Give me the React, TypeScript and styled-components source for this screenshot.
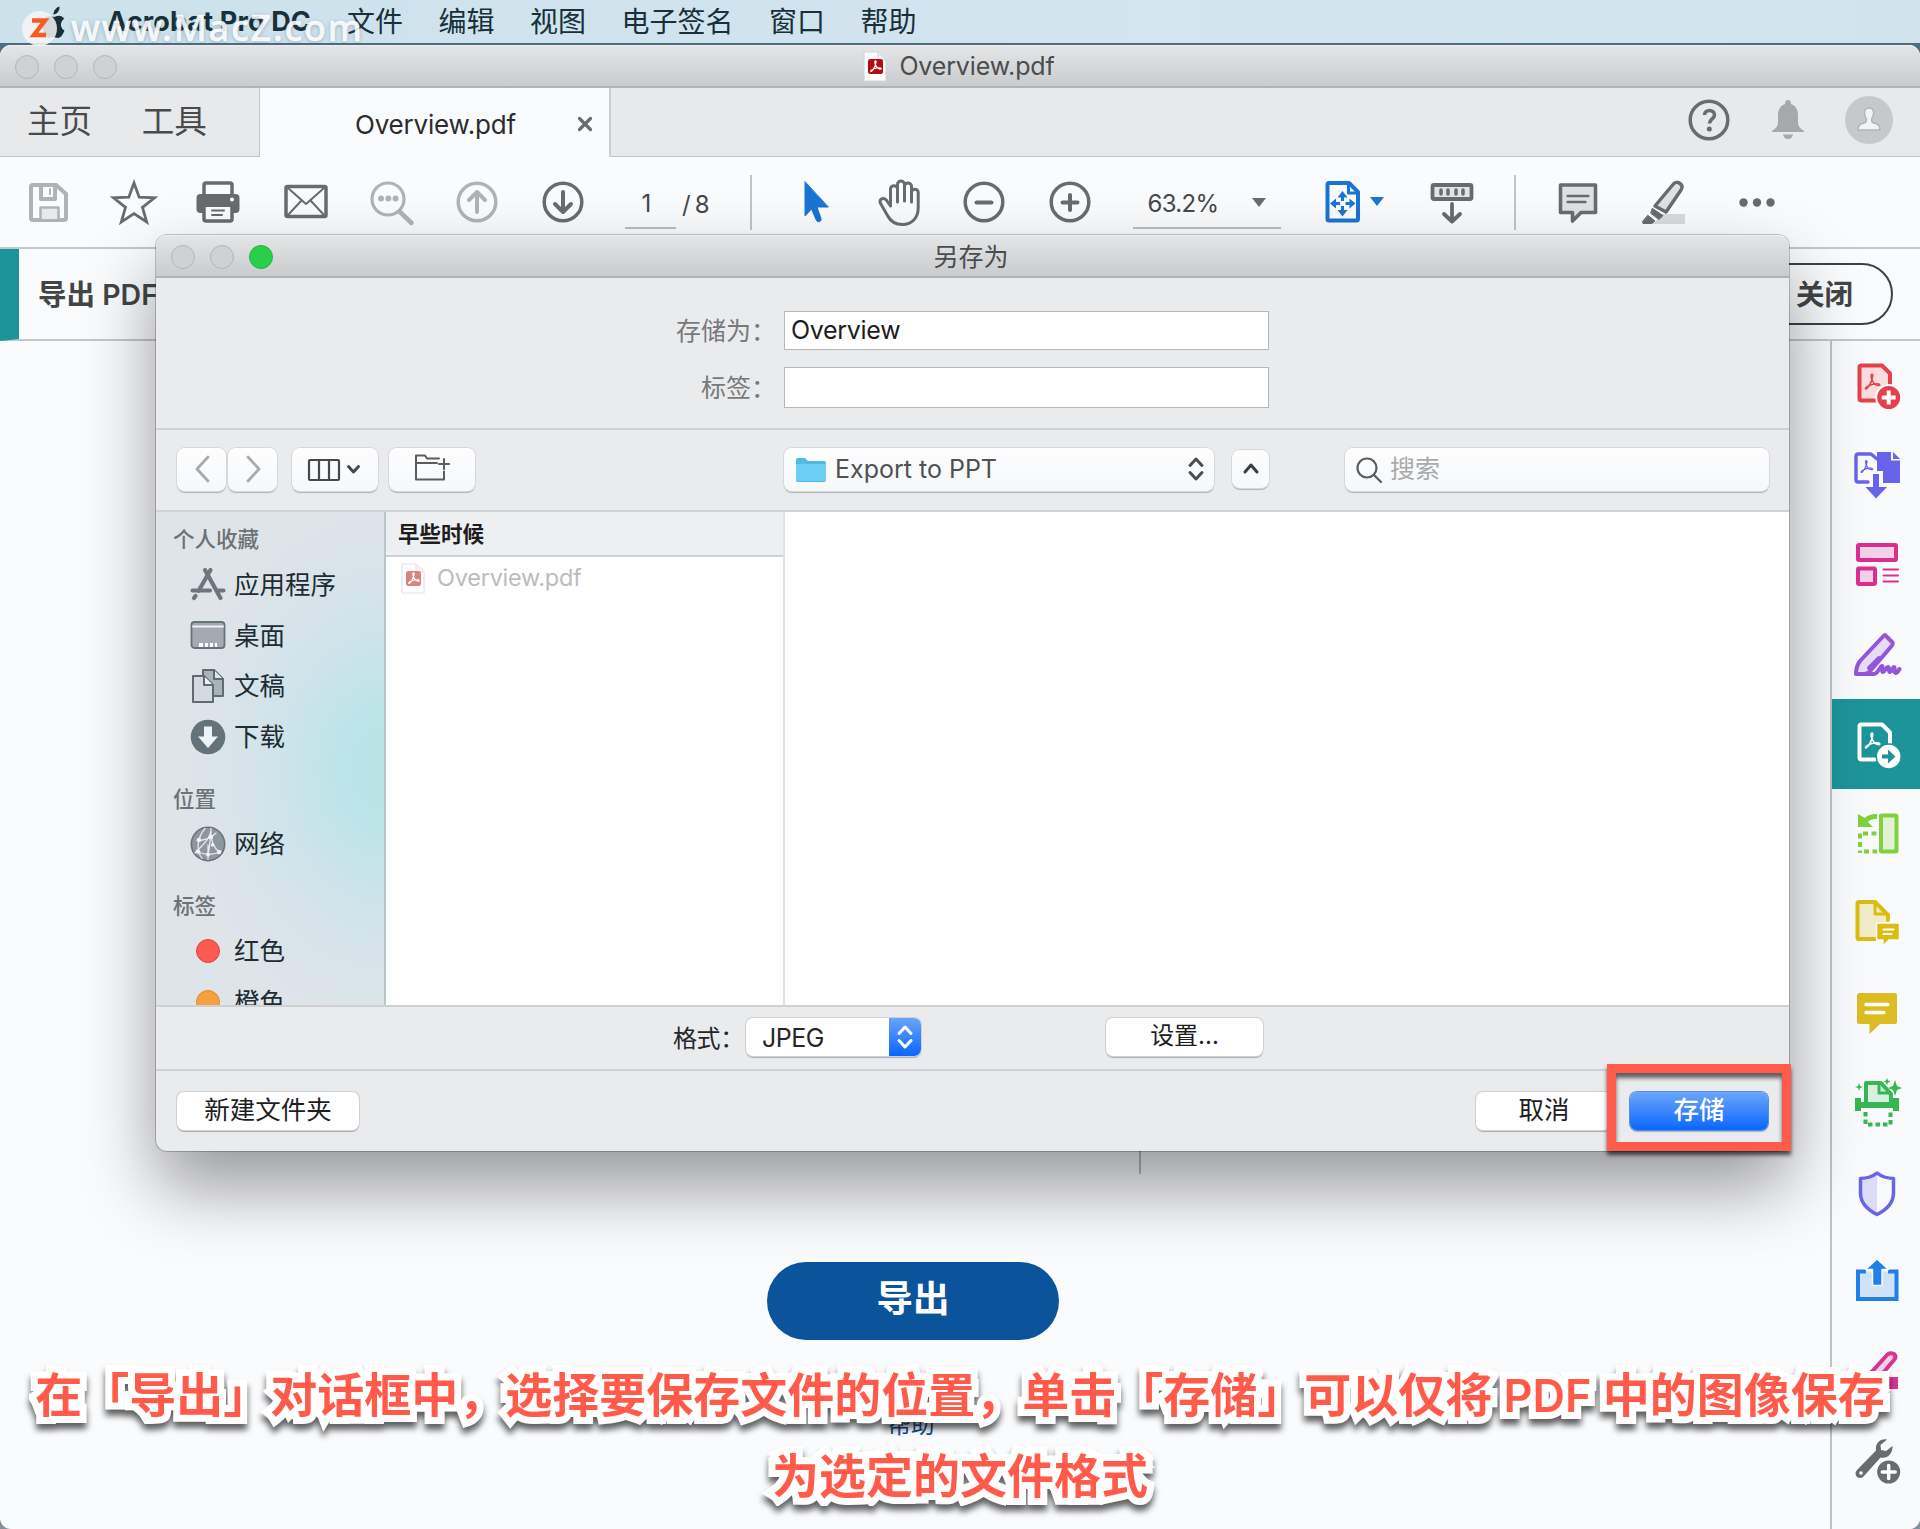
import React from 'react';
import styled, { createGlobalStyle } from 'styled-components';

const GREY = '#6a6b6d';
const PALE = '#b1b2b4';
const BLUE = '#1b74d2';

const GlobalStyle = createGlobalStyle`
  * { box-sizing: border-box; }
  html, body { margin: 0; padding: 0; }
  body {
    font-family: Inter, "Noto Sans CJK SC", sans-serif;
    line-height: 1;
    width: 1920px;
    height: 1529px;
    overflow: hidden;
    background: #4f788c;
  }
  svg { display: block; flex: none; overflow: visible; }
`;

const Screen = styled.div`
  position: relative;
  width: 1920px;
  height: 1529px;
  overflow: hidden;
  display: flex;
  flex-direction: column;
  background: linear-gradient(#4b6d80 0 60px, #7d93a3 100%);
`;

/* ---------- menu bar ---------- */

const MenuBar = styled.header`
  display: flex;
  align-items: center;
  height: 43px;
  padding-left: 38px;
  flex: none;
  background: linear-gradient(90deg, #cbe2ea, #d3e5ef 60%, #d0e5eb);
  color: #17303a;
  font-size: 28px;
`;

const AppName = styled.span`
  margin-left: 38px;
  width: 240px;
  font-weight: 700;
  font-size: 27px;
  letter-spacing: 0.15px;
  white-space: nowrap;
`;

const MenuItems = styled.nav`
  display: flex;
  gap: 35.5px;
  white-space: nowrap;
`;

/* ---------- application window ---------- */

const AppWindow = styled.main`
  display: flex;
  flex-direction: column;
  flex: 1;
  margin-top: 2px;
  border-radius: 11px;
  overflow: hidden;
  background: #fafbfd;
`;

const TitleBar = styled.div<{ $h: number }>`
  position: relative;
  display: flex;
  align-items: center;
  justify-content: center;
  flex: none;
  height: ${p => p.$h}px;
  padding: 1px 2px 0 0;
  background: linear-gradient(#e4e5e6, #cacbcd);
  border-top: 1px solid #f0f0f1;
  border-bottom: 2px solid #b1b2b4;
  color: #4b4c4e;
  font-size: 25px;
`;

const Lights = styled.div<{ $left: number }>`
  position: absolute;
  left: ${p => p.$left}px;
  top: calc(50% + 0.5px);
  transform: translateY(-50%);
  display: flex;
  gap: 15px;
`;

const Light = styled.i<{ $on?: boolean }>`
  width: 24px;
  height: 24px;
  border-radius: 50%;
  background: ${p => (p.$on ? '#27cf4b' : '#d0d1d3')};
  border: 1.5px solid ${p => (p.$on ? '#1fb83e' : '#b4b5b7')};
`;

const DocTitle = styled.span`
  margin-left: 12px;
  letter-spacing: -0.15px;
`;

const TabBar = styled.div`
  display: flex;
  flex: none;
  height: 69px;
  background: #e8e9eb;
`;

const TabLinks = styled.div`
  display: flex;
  gap: 49.5px;
  width: 260px;
  padding: 17px 0 0 27px;
  font-size: 32.6px;
  color: #4a4a4c;
  border-right: 1px solid #c3c4c6;
  border-bottom: 1px solid #c3c4c6;
`;

const ActiveTab = styled.div`
  display: flex;
  align-items: center;
  justify-content: space-between;
  width: 351px;
  padding: 4px 16px 0 95px;
  background: #fafbfd;
  border-right: 2px solid #cdced0;
  font-size: 26px;
  letter-spacing: -0.2px;
  color: #2c2c2e;
`;

const TabActions = styled.div`
  display: flex;
  flex: 1;
  align-items: center;
  justify-content: flex-end;
  padding: 0 27px 4px 0;
  border-bottom: 1px solid #c3c4c6;
  svg + svg { margin-left: 37px; }
`;

const Toolbar = styled.div`
  display: flex;
  align-items: center;
  flex: none;
  height: 92px;
  border-bottom: 2px solid #c5c6c8;
`;

const Tool = styled.div<{ $gap: number; $w?: number }>`
  display: flex;
  justify-content: center;
  flex: none;
  width: ${p => p.$w ?? 48}px;
  margin-left: ${p => p.$gap}px;
`;

const Rule = styled.i<{ $gap: number }>`
  width: 2px;
  height: 55px;
  margin-left: ${p => p.$gap}px;
  background: #c2c3c5;
`;

const UnderlinedField = styled.div<{ $gap: number; $w: number }>`
  display: flex;
  align-items: center;
  justify-content: ${p => (p.$w > 100 ? 'space-between' : 'center')};
  width: ${p => p.$w}px;
  height: 54px;
  margin-left: ${p => p.$gap}px;
  padding: ${p => (p.$w > 100 ? '3px 15px 0 15px' : '5px 9px 0 0')};
  border-bottom: 2px solid #bcbdbf;
  font-size: 24px;
  letter-spacing: -0.7px;
  color: #47484a;
`;

const ZoomValue = styled.span`
  padding-top: 3px;
`;

const PageCount = styled.span`
  width: 28px;
  margin: 6px 0 0 6px;
  font-size: 24px;
  letter-spacing: -1.3px;
  white-space: nowrap;
  color: #47484a;
`;

const PaneBar = styled.div`
  display: flex;
  align-items: center;
  flex: none;
  height: 92px;
  border-bottom: 2px solid #c5c6c8;
  border-left: 19.5px solid #1c9499;
  padding: 0 27px 0 19px;
  justify-content: space-between;
  font-size: 28.5px;
  font-weight: 600;
  color: #434446;
`;

const PaneTitle = styled.span`
  padding-top: 3px;
`;

const ClosePill = styled.button`
  width: 160px;
  height: 62px;
  padding: 2px 38px 0 0;
  text-align: right;
  border: 2px solid #3f4042;
  border-radius: 31px;
  background: #fafbfd;
  font: inherit;
  color: inherit;
`;

const Workspace = styled.div`
  display: flex;
  flex: 1;
`;

const Document = styled.section`
  display: flex;
  flex-direction: column;
  align-items: center;
  flex: 1;
`;

const ColumnRule = styled.i`
  width: 2px;
  height: 833px;
  margin-left: 449px;
  background: #b9babc;
`;

const ExportButton = styled.button`
  width: 292px;
  height: 78px;
  margin-top: 88px;
  margin-right: 4px;
  padding: 0 0 9px;
  border: 0;
  border-radius: 39px;
  background: #0b539b;
  color: #fff;
  font: 600 36.5px Inter, "Noto Sans CJK SC", sans-serif;
`;

const HelpLink = styled.a`
  margin-top: 73px;
  margin-right: 8px;
  font-size: 23.5px;
  color: #0b4f90;
`;

const Rail = styled.aside`
  width: 90px;
  border-left: 2px solid #c0c1c3;
  background: #f9fafc;
`;

const RailSlot = styled.div<{ $active?: boolean }>`
  display: flex;
  align-items: center;
  justify-content: center;
  height: 89.6px;
  padding: 1px 0 0 1px;
  background: ${p => (p.$active ? '#1c9499' : 'transparent')};
`;

/* ---------- save dialog ---------- */

const Dialog = styled.section`
  position: absolute;
  left: 156px;
  top: 235px;
  width: 1633px;
  height: 916px;
  display: flex;
  flex-direction: column;
  border-radius: 11px;
  background: #eaebed;
  box-shadow: 0 0 0 1px rgba(0, 0, 0, 0.22), 0 36px 72px rgba(0, 0, 0, 0.4);
`;

const DialogTitle = styled(TitleBar)`
  border-radius: 11px 11px 0 0;
  padding: 3px 3px 0 0;
`;

const NameForm = styled.div`
  display: grid;
  grid-template-columns: 628px 485px;
  grid-template-rows: 39px 41px;
  row-gap: 17px;
  align-items: center;
  height: 152px;
  padding-top: 33px;
  align-content: start;
  border-bottom: 2px solid #d0d1d3;
`;

const FormLabel = styled.label`
  padding: 1px 8px 0 0;
  text-align: right;
  font-size: 25px;
  color: #78797b;
`;

const FormField = styled.div`
  display: flex;
  align-items: center;
  height: 100%;
  padding-left: 6px;
  border: 1.5px solid #b6b7b9;
  background: #fff;
  font-size: 25px;
  letter-spacing: -0.3px;
  color: #1d1d1f;
`;

const BrowseBar = styled.div`
  display: flex;
  align-items: center;
  flex: none;
  height: 82px;
  padding: 0 21px 1.5px 21px;
  border-bottom: 2px solid #d0d1d3;
`;

const Control = styled.div<{ $w: number; $gap?: number; $h?: number }>`
  display: flex;
  align-items: center;
  justify-content: center;
  flex: none;
  width: ${p => p.$w}px;
  height: ${p => p.$h ?? 43}px;
  margin-left: ${p => p.$gap ?? 0}px;
  border-radius: 8px;
  background: linear-gradient(#fdfdfe, #f6f8fa);
  box-shadow: 0 0 0 1px #d6d7d9, 0 1.5px 1px #b2b3b5;
`;

const Location = styled(Control)`
  justify-content: flex-start;
  padding: 0 10px 0 12px;
  font-size: 25px;
  letter-spacing: 0;
  color: #505153;
  span { flex: 1; margin-left: 9px; padding-top: 1px; }
`;

const SearchBox = styled(Control)`
  justify-content: flex-start;
  padding: 1px 0 0 11px;
  gap: 8px;
  font-size: 25px;
  color: #a9aaac;
`;

const Browser = styled.div`
  display: flex;
  flex: none;
  height: 493px;
  overflow: hidden;
  background: #fff;
`;

const Sidebar = styled.nav`
  width: 230px;
  padding-left: 17px;
  border-right: 2px solid #b9c5ca;
  background:
    radial-gradient(ellipse 200px 265px at 100% 52%, #b7e3e7 0, #bbe4e8 20%, rgba(203, 228, 234, 0.7) 58%, rgba(222, 229, 235, 0) 100%),
    #dfe4e9;
`;

const SideHeading = styled.h3<{ $top: number; $h: number }>`
  margin: 0;
  padding-top: ${p => p.$top}px;
  height: ${p => p.$h}px;
  font-size: 21.5px;
  font-weight: 500;
  color: #6c7276;
`;

const SideItem = styled.div`
  display: flex;
  align-items: center;
  height: 50.7px;
  padding: 0 0 1.5px 17px;
  gap: 8px;
  font-size: 25.5px;
  color: #202c32;
`;

const Dot = styled.i<{ $fill: string; $edge: string }>`
  width: 24px;
  height: 24px;
  margin: 0 6px;
  border-radius: 50%;
  background: ${p => p.$fill};
  border: 1.5px solid ${p => p.$edge};
`;

const FileColumn = styled.div`
  width: 399px;
  border-right: 2px solid #e2e3e5;
`;

const ColumnHead = styled.div`
  height: 45px;
  padding: 12px 0 0 12px;
  border-bottom: 2px solid #cfd0d2;
  background: #eeeff1;
  font-size: 21.5px;
  font-weight: 600;
  color: #1d1d1f;
`;

const FileRow = styled.div`
  display: flex;
  align-items: center;
  gap: 12px;
  height: 42px;
  padding-left: 15px;
  font-size: 23.5px;
  letter-spacing: -0.25px;
  color: #bbbcbe;
`;

const FormatBar = styled.div`
  display: flex;
  align-items: center;
  flex: none;
  height: 66px;
  padding: 1px 0 0 517px;
  border-top: 2px solid #cfd0d2;
  border-bottom: 2px solid #d0d1d3;
  font-size: 24px;
  color: #262628;
`;

const FormatLabel = styled.label`
  width: 73px;
  padding-top: 1px;
  letter-spacing: -0.4px;
`;

const FormatSelect = styled.div`
  display: flex;
  align-items: center;
  justify-content: space-between;
  width: 175px;
  height: 38px;
  margin-top: -3px;
  padding-left: 16px;
  border-radius: 7px;
  overflow: hidden;
  background: #fff;
  box-shadow: 0 0 0 1px #cfd0d2, 0 1.5px 1px #aeafb1;
  font-size: 25px;
  letter-spacing: -0.5px;
`;

const FormatValue = styled.span`
  padding-top: 3px;
`;

const Stepper = styled.span`
  display: flex;
  align-items: center;
  justify-content: center;
  width: 32px;
  height: 100%;
  background: linear-gradient(#68a5fb, #0a66ff);
`;

const PushButton = styled.button<{ $w: number; $primary?: boolean }>`
  width: ${p => p.$w}px;
  height: 38px;
  padding: 0 0 1px;
  border: 0;
  border-radius: 7px;
  background: ${p => (p.$primary ? 'linear-gradient(#6ba6fa, #0a66ff)' : '#fff')};
  box-shadow: 0 0 0 1px ${p => (p.$primary ? '#4f8ff0' : '#d0d1d3')}, 0 1.5px 1px #aeafb1;
  color: ${p => (p.$primary ? '#fff' : '#1d1d1f')};
  font-family: inherit;
  font-size: 25.5px;
  font-weight: ${p => (p.$primary ? 500 : 400)};
  line-height: 1;
`;

const SettingsButton = styled(PushButton)`
  margin: -4px 0 0 185px;
  font-size: 24px;
`;

const Footer = styled.footer`
  display: flex;
  align-items: center;
  flex: 1;
  padding: 0 21px 1px 21px;
`;

const Spacer = styled.i`
  flex: 1;
`;

const SaveSlot = styled.span`
  margin-left: 18px;
`;

/* ---------- overlays ---------- */

const Highlight = styled.div`
  position: absolute;
  left: 1607px;
  top: 1064px;
  width: 184px;
  height: 87px;
  border: 9.5px solid #ff5a4a;
  box-shadow: 0 4px 4px rgba(0, 0, 0, 0.65), inset 0 5px 4px rgba(0, 0, 0, 0.6);
`;

const Caption = styled.p`
  position: absolute;
  left: 0;
  top: 1354.5px;
  width: 1920px;
  margin: 0;
  text-align: center;
  white-space: nowrap;
  font-size: 47px;
  line-height: 80px;
  font-weight: 600;
  color: #ff5a4a;
  -webkit-text-stroke: 14px #fff;
  paint-order: stroke fill;
  stroke-linejoin: round;
  filter: drop-shadow(0 6px 3px rgba(0, 0, 0, 0.62));
`;

const Latin = styled.span`
  letter-spacing: 0;
  font-size: 45px;
`;

const Watermark = styled.div`
  position: absolute;
  left: 22px;
  top: 10px;
  display: flex;
  align-items: center;
  font: 500 36px/1 "Noto Sans", sans-serif;
  color: rgba(255, 255, 255, 0.88);
  -webkit-text-stroke: 0.5px rgba(255, 255, 255, 0.88);
  text-shadow: 0 1px 4px rgba(60, 90, 100, 0.4);
`;

const WatermarkText = styled.span`
  margin-left: 14px;
  letter-spacing: 1.8px;
`;

const WatermarkLogo = styled.span`
  display: grid;
  place-items: center;
  width: 35px;
  height: 35px;
  border-radius: 50%;
  background: rgba(244, 246, 247, 0.86);
`;

/* ---------- drawings ---------- */

type IconProps = { children: React.ReactNode; w?: number; h?: number; stroke?: string; sw?: number };

const Icon = ({ children, w = 48, h = 48, stroke = GREY, sw = 3.5 }: IconProps) => (
  <svg width={w} height={h} viewBox={`0 0 ${w} ${h}`} fill="none" stroke={stroke} strokeWidth={sw} strokeLinecap="round" strokeLinejoin="round">
    {children}
  </svg>
);

const SWIRL =
  'M12 3c-1.7 0-1.5 3.4 0 6.6 1.6 3.6 4.2 6 6.9 6.4 2.8.4 2.7-2-.6-2.1-4.2-.1-8.8 1.1-12 3.2-2.9 2-2.1 3.8-.2 2.1 2.1-1.9 4.6-6.3 5.8-10.1C12.900 6 13.300 3 12 3z';

const Caret = ({ color }: { color: string }) => (
  <svg width="14" height="10" viewBox="0 0 14 10"><path d="M0 0h14L7 9z" fill={color} /></svg>
);

const PdfFile = ({ faded }: { faded?: boolean }) => (
  <svg width="24" height="31" viewBox="0 0 24 31" opacity={faded ? 0.65 : 1}>
    <path d="M1 1h14l8 8v21H1z" fill="#fff" stroke="#d4d5d7" strokeWidth="1.2" />
    <path d="M15 1v8h8" fill="#eee" stroke="#d4d5d7" />
    <rect x="5" y="8" width="15" height="15" rx="2.500" fill={faded ? '#c9413f' : '#b50d0d'} />
    <path d={SWIRL} transform="translate(5 8) scale(.63)" fill="none" stroke="#fff" strokeWidth="1.900" />
  </svg>
);

const UpDown = ({ color, w = 3 }: { color: string; w?: number }) => (
  <Icon w={16} h={24} stroke={color} sw={w}><path d="M2 8.500 8 2l6 6.500M2 15.500 8 22l6-6.500" /></Icon>
);

const ToolbarIcons = {
  save: (
    <Icon stroke={PALE} sw={4}>
      <path d="M8 7h23l10 9v24q0 2-2 2H8q-2 0-2-2V9q0-2 2-2z" strokeLinejoin="miter" />
      <path d="M16 8v13h14V8" /><path d="M25 11v5" strokeWidth="2" />
      <path d="M15.500 41V29.500h18V41" fill="#e8e9ea" strokeWidth="2.500" />
    </Icon>
  ),
  star: (
    <Icon sw={2.8}>
      <path strokeLinejoin="miter" d="M24 5l5.200 14.200 15.300.600-12 9.500 4.200 14.700L24 35.600 11.300 44l4.200-14.700-12-9.500 15.300-.600z" />
    </Icon>
  ),
  print: (
    <Icon>
      <path d="M10 18V7q0-2 2-2h24q2 0 2 2v11" />
      <rect x="2.500" y="16" width="43" height="19" rx="4" fill={GREY} stroke="none" />
      <path d="M10 27v14q0 2 2 2h24q2 0 2-2V27z" fill="#fafbfd" />
      <rect x="8.200" y="26" width="31.500" height="3" fill={GREY} stroke="none" />
      <circle cx="38" cy="21.500" r="2" fill="#fff" stroke="none" />
      <path d="M18 32.500h12M18 37h10" strokeWidth="2" />
    </Icon>
  ),
  mail: (
    <Icon sw={3.5}>
      <rect x="4" y="8.500" width="40" height="30" rx="1.500" />
      <path d="M6 10l18 16 18-16M6 37l13-14M42 37 29 23" strokeWidth="2" />
    </Icon>
  ),
  find: (
    <Icon stroke={PALE} sw={3.2}>
      <circle cx="20" cy="21" r="16" /><path d="M32 34l11.500 11" strokeWidth="4.500" />
      <g fill={PALE} stroke="none"><circle cx="13" cy="20.500" r="3" /><circle cx="20.300" cy="20.500" r="3" /><circle cx="27.600" cy="20.500" r="3" /></g>
    </Icon>
  ),
  up: <Icon stroke={PALE}><circle cx="24" cy="24" r="18.800" /><path d="M24 34V14.500M16 22l8-8 8 8" strokeWidth="4" /></Icon>,
  down: <Icon><circle cx="24" cy="24" r="18.800" /><path d="M24 14v19.500M16 26l8 8 8-8" strokeWidth="4" /></Icon>,
  cursor: <Icon stroke={BLUE} sw={1}><path fill={BLUE} d="M12 4v34l6.500-7 5 11.500c1.500 2.500 5.500 1 4.500-2L24 29h11z" /></Icon>,
  hand: (
    <Icon sw={3}>
      <path d="M14.500 28V10.500a3.600 3.600 0 0 1 7 0V24M21.500 23V6.500a3.500 3.500 0 0 1 7 0V23M28.500 23V8.500a3.500 3.500 0 0 1 7 0V24M35.500 23v-8.500a3.300 3.300 0 0 1 6.700 0V30c0 10-6.500 16.500-15.700 16.500-8 0-12-3-15-9L4.300 25c-1.300-4 3.200-6 6-3l4.200 6" />
    </Icon>
  ),
  minus: <Icon><circle cx="24" cy="24" r="18.800" /><path d="M16.500 24.500h15" strokeWidth="4" /></Icon>,
  plus: <Icon><circle cx="24" cy="24" r="18.800" /><path d="M16.500 24.500h15M24 17v15" strokeWidth="4" /></Icon>,
  fit: (
    <Icon stroke={BLUE} sw={4}>
      <path d="M10 5h20l9 9v27q0 1.500-1.500 1.500H10q-1.500 0-1.500-1.500V6.500Q8.500 5 10 5z" />
      <path d="M29.500 6v9H38" strokeWidth="3" />
      <path d="M23.500 18v5M23.500 28v7M15 25.500h6M26.500 25.500h6" strokeWidth="3" strokeLinecap="butt" />
      <path d="M23.500 13l5 6.500h-10zM23.500 38.500l5-6.500h-10zM11 25.500l6-5v10zM36.500 25.500l-6-5v10z" fill={BLUE} stroke="none" />
    </Icon>
  ),
  keys: (
    <Icon sw={3.8}>
      <rect x="4.500" y="7" width="39" height="14" rx="1.500" fill="#e3e4e6" />
      <path d="M13 12v4M20 12v4M28 12v4M35 12v4" strokeWidth="3.500" />
      <path d="M24 26v17M16 36l8 7.500 8-7.500" />
    </Icon>
  ),
  comment: (
    <Icon sw={3.6}>
      <path d="M6.500 7h35v27.500H27L18.500 43v-8.500h-12z" fill="#e0e1e3" /><path d="M13.500 18h21M13.500 24h18" strokeWidth="2.300" />
    </Icon>
  ),
  highlight: (
    <Icon>
      <path d="M13 46l10-10h22v10z" fill="#d9dadc" stroke="none" />
      <path d="M33 6.500c2-2.500 5-2.500 7-1s2.700 4 1 6.500L26 34l-11-6z" fill="#e0e1e3" />
      <path d="M12.500 30.500l10.500 7-4 4-8-6z" fill={GREY} strokeWidth="1" />
      <path d="M8 37.500l7 5.500-3 2.500H3q-1-1 0-2.500z" fill={GREY} strokeWidth="1" />
    </Icon>
  ),
  more: <Icon><g fill={GREY} stroke="none"><circle cx="10.500" cy="24.500" r="4.200" /><circle cx="24" cy="24.500" r="4.200" /><circle cx="37.500" cy="24.500" r="4.200" /></g></Icon>,
};

const RailIcons: React.ReactNode[] = [
  <Icon stroke="#e5404b" sw={4}>
    <path d="M22 38.500H8.500q-2 0-2-2v-31q0-2 2-2H29l8 8V22" fill="#f9dcde" />
    <path d={SWIRL} transform="translate(8.500 9.500) scale(.88)" strokeWidth="1.700" />
    <circle cx="35.700" cy="35.500" r="12.500" fill="#e5404b" stroke="#fafbfd" strokeWidth="2" />
    <path d="M35.700 28.500v14M28.700 35.500h14" stroke="#fff" strokeLinecap="butt" />
  </Icon>,
  <Icon stroke="#6564ea" sw={3.4}>
    <path d="M24 0h14v8.500h9V31H30V19h-6z" fill="#6564ea" stroke="none" /><path d="M40 0l7 7h-7z" fill="#6564ea" stroke="none" />
    <path d="M15 30H5q-2 0-2-2V4q0-2 2-2h13l6 5" />
    <path d={SWIRL} transform="translate(5 6.500) scale(.7)" strokeWidth="1.800" />
    <path d="M20 22h6v13h8L23 46.500 12.500 35H20z" fill="#6564ea" stroke="none" />
  </Icon>,
  <Icon stroke="#dc2f8d" sw={4}>
    <rect x="5" y="4" width="38" height="15" rx="1" fill="#f3d1e8" /><rect x="5" y="27.500" width="17" height="15.500" rx="1" fill="#f3d1e8" />
    <path d="M30.500 28.500H45M30.500 34.500H45M30.500 40.500H45" strokeWidth="2" />
  </Icon>,
  <Icon stroke="#9355da" sw={4}>
    <path d="M32 4l7 7c1 1 1 2 0 3.500L19 38c-2 3-5 5-8 5H3c0-4 1-9 4-13L31 4.500" fill="#e7dcf7" />
    <path d="M16 37l10-10M12 43h9c4 0 6-8 8-8 1.500 0-1 6 1 6s3-5 5-5 0 5 2 5 2.500-5 4-5-.5 6 1.500 6 3-2 4-4" />
  </Icon>,
  <Icon stroke="#fff" sw={4}>
    <path d="M22 38.500H8.500q-2 0-2-2v-31q0-2 2-2H29l8 8V22" />
    <path d={SWIRL} transform="translate(8.500 9.500) scale(.88)" strokeWidth="1.800" />
    <circle cx="35.700" cy="35.500" r="12.500" fill="#fff" stroke="#1c9499" strokeWidth="1.500" />
    <path d="M29 33.500h6v-5l7.500 7-7.500 7v-5h-6z" fill="#1c9499" stroke="none" />
  </Icon>,
  <Icon stroke="#80d13d" sw={4}>
    <rect x="28" y="5.500" width="15.500" height="36" rx="1" fill="#e0f2d3" />
    <path d="M24 4c-6 0-9 1-12 4L5 4v13h15l-5-5c3-3 5-3 9-3z" fill="#80d13d" stroke="none" />
    <path d="M7 23.500V43M11 41.500h13M10 23.500h14" strokeDasharray="5 3.500" strokeLinecap="butt" />
  </Icon>,
  <Icon stroke="#dabd10" sw={4}>
    <path d="M22 39H6q-1.500 0-1.500-1.500V3.500Q4.500 2 6 2h16l13 13v5" fill="#f1ecc7" />
    <path d="M22 2v12h13" strokeWidth="3" />
    <path d="M25 23h20q1.500 0 1.500 1.500v14q0 1.500-1.500 1.500h-9l-6 6v-6h-5q-1.500 0-1.500-1.500v-14Q23.500 23 25 23z" fill="#dabd10" stroke="#f9fafc" strokeWidth="1.500" />
    <path d="M30.500 29.500h10M30.500 34h8" stroke="#fff" strokeWidth="2" />
  </Icon>,
  <Icon stroke="#dcbc22">
    <path d="M6.500 4h35q2.500 0 2.500 2.500v26q0 2.500-2.500 2.500H27L16.500 45V35h-10Q4 35 4 32.500v-26Q4 4 6.500 4z" fill="#dcbc22" stroke="none" />
    <path d="M13 15.500h22M13 23.500h18" stroke="#fff" strokeWidth="3.500" />
  </Icon>,
  <Icon stroke="#35b755" sw={4}>
    <path d="M13 24V4h15l10 11v9" fill="#d8f0dd" /><path d="M26 5v9h10" strokeWidth="3" />
    <path d="M5 19v13M43 19v13M4 26h40" strokeWidth="6" strokeLinecap="butt" />
    <path d="M12.500 33v12.500h25V33" strokeDasharray="4.500 3" strokeLinecap="butt" />
    <path d="M6 4l1 3 3 1-3 1-1 3-1-3-3-1 3-1zM42 1l2 6 5 2-5 2-2 6-2-6-5-2 5-2zM34-1l1 2.500 3 1-3 1-1 3-1-3-3-1 3-1z" fill="#35b755" stroke="none" />
  </Icon>,
  <Icon stroke="#6766e8" sw={3.5}>
    <path d="M24 4.500C19 8 13.500 9 8 9.500V24c0 10 7 16.500 16 21z" fill="#dcdcf8" stroke="none" />
    <path d="M24 4c5 4 11 5.300 16.500 5.500V24c0 10-7.500 17-16.500 21.500C15 41 7.500 34 7.500 24V9.500C13 9.300 19 8 24 4z" />
  </Icon>,
  <Icon stroke="#1f80e8" sw={4}>
    <path d="M13 13.500H5V41h38.500V13.500H35" fill="#cfe2f8" strokeLinecap="butt" strokeLinejoin="miter" />
    <path d="M24 1l11.500 10.500H29V27.500h-9.500V11.500H12.500z" fill="#1f80e8" stroke="#f5f9fd" strokeWidth="1.500" />
  </Icon>,
  <Icon stroke="#d63592" sw={4}>
    <path d="M16 27 34 7q3-3 7-1 3 3 0 6L24 32z" fill="#f3d1e8" /><rect x="28" y="29" width="17" height="12" fill="#d63592" stroke="none" />
  </Icon>,
  <Icon stroke={GREY}>
    <path d="M34 2.500c-7-1-12 4-11 11L4 33c-3 3-1 8 3 8 2 0 3-1 4-2l16.500-18.500C34 22 40 17 39.500 9l-6.500 5-5-1-.5-5z" fill={GREY} stroke="none" />
    <circle cx="8" cy="36" r="1.800" fill="#fff" stroke="none" />
    <circle cx="35.700" cy="35" r="12.500" fill={GREY} stroke="#f9fafc" strokeWidth="2" />
    <path d="M35.700 28.500v13M29.200 35h13" stroke="#fff" />
  </Icon>,
];

const SideIcons = {
  apps: <Icon w={36} h={36} stroke="#6c777d" sw={4.200}><path d="M15 3l15.500 28M20.500 3 8.500 24M5.500 29 4 31M2.500 23.500H20M28 23.500h5.500" /></Icon>,
  desktop: (
    <Icon w={36} h={36} stroke="#66727a" sw={1.8}>
      <rect x="1.500" y="5" width="33" height="26" rx="3" fill="#a2abb1" /><path d="M3 9.500h30" stroke="#eef2f4" strokeWidth="2" />
      <path d="M9 28h4M15 28h3M20 28h3M25 28h2" stroke="#fff" strokeWidth="4" strokeLinecap="butt" />
    </Icon>
  ),
  docs: (
    <Icon w={36} h={36} stroke="#5f6b72" sw={2}>
      <path d="M13 2h11l9 9v17H13z" fill="#aab3b9" /><path d="M24 2v9h9" fill="#dfe5ea" />
      <path d="M3 8h11l9 9v17H3z" fill="#d3dae0" /><path d="M14 8v9h9" fill="#eef2f4" />
    </Icon>
  ),
  down: <Icon w={36} h={36}><circle cx="18" cy="18" r="17.300" fill="#667279" stroke="none" /><path d="M14 7.500h8v10h6L18 29 8 17.500h6z" fill="#eef4f6" stroke="none" /></Icon>,
  net: (
    <Icon w={36} h={36} stroke="#e3e9ed" sw={1.300}>
      <circle cx="18" cy="18" r="16.700" fill="#8d979f" stroke="#68747b" strokeWidth="1.600" />
      <path d="M15 2.500C7 12 6 24 12 32.500M21 2.500C21 14 9 22 5 27M21 2.500C20 14 24 22 30 27M7 14.500c7 0 13-1 19-7.500M7 25.500c8 4 16 4 24 0M18 19v14M20 11c1 8-2 13-2 21" />
      <g fill="#eef2f4" stroke="none"><circle cx="9" cy="14" r="2.200" /><circle cx="21" cy="11" r="2.200" /><circle cx="8" cy="25.500" r="2.200" /><circle cx="18" cy="28.500" r="2" /><circle cx="29" cy="26" r="2.200" /><circle cx="22.500" cy="19" r="1.700" /></g>
    </Icon>
  ),
};

/* ---------- page ---------- */

export default function App() {
  return (
    <>
      <GlobalStyle />
      <Screen>
        <MenuBar>
          <svg width="31" height="34" viewBox="0 0 31 34">
            <path fill="#17303a" d="M26.500 25.500c-1.700 4.500-4 7.500-6.500 7.500-2 0-2.700-1-4.500-1s-2.700 1-4.500 1C7 33 4 25.500 4 20c0-6 4-9 7.500-9 2 0 3.200 1 4.500 1s2.700-1.200 5-1.200c2 0 4 1 5.200 3-4.500 3-4.200 9.500.3 11.700zM15.500 9.500c0-4 2.500-7 6-8 .5 4-2.500 8-6 8z" />
          </svg>
          <AppName>Acrobat Pro DC</AppName>
          <MenuItems>
            <span>文件</span><span>编辑</span><span>视图</span><span>电子签名</span><span>窗口</span><span>帮助</span>
          </MenuItems>
        </MenuBar>

        <AppWindow>
          <TitleBar $h={43}>
            <Lights $left={15}><Light /><Light /><Light /></Lights>
            <PdfFile />
            <DocTitle>Overview.pdf</DocTitle>
          </TitleBar>

          <TabBar>
            <TabLinks><span>主页</span><span>工具</span></TabLinks>
            <ActiveTab>
              <span>Overview.pdf</span>
              <Icon w={16} h={16} sw={3.2}><path d="M2.500 1.500l11 11M13.500 1.500l-11 11" /></Icon>
            </ActiveTab>
            <TabActions>
              <Icon w={44} h={44}>
                <circle cx="22" cy="22" r="18.800" />
                <path d="M17.500 17c0-6 10-6 10 0 0 4-5 4-5 8.500" strokeWidth="3.600" strokeLinecap="butt" />
                <circle cx="22.300" cy="31" r="2.500" fill={GREY} stroke="none" />
              </Icon>
              <Icon w={40} h={44}>
                <path d="M20 2q3 0 3 4c5 2 7 6 7 11v7c0 4 2 6 6 9v1H4v-1c4-3 6-5 6-9v-7c0-5 2-9 7-11q0-4 3-4zM15 36.500h10q-1 4.500-5 4.500t-5-4.500z" fill="#a7a8aa" stroke="none" />
              </Icon>
              <Icon w={48} h={48}>
                <circle cx="24" cy="24" r="24" fill="#c7c8ca" stroke="none" />
                <path d="M24 12c3.500 0 5 2.500 4.500 6-.5 3-2 4-2 6s1 3 4 3.500c3.500.800 4.500 3 4.500 6.500H13c0-3.500 1-5.700 4.500-6.500 3-.5 4-1.500 4-3.500s-1.500-3-2-6C19 14.500 20.500 12 24 12z" fill="#f2f3f4" stroke="#b3b4b6" strokeWidth="1.500" />
              </Icon>
            </TabActions>
          </TabBar>

          <Toolbar>
            <Tool $gap={24.5}>{ToolbarIcons.save}</Tool>
            <Tool $gap={37.5}>{ToolbarIcons.star}</Tool>
            <Tool $gap={36}>{ToolbarIcons.print}</Tool>
            <Tool $gap={39.5}>{ToolbarIcons.mail}</Tool>
            <Tool $gap={38.5}>{ToolbarIcons.find}</Tool>
            <Tool $gap={37}>{ToolbarIcons.up}</Tool>
            <Tool $gap={37.5}>{ToolbarIcons.down}</Tool>
            <UnderlinedField $gap={38.5} $w={51}>1</UnderlinedField>
            <PageCount>/ 8</PageCount>
            <Rule $gap={39.5} />
            <Tool $gap={41}>{ToolbarIcons.cursor}</Tool>
            <Tool $gap={35}>{ToolbarIcons.hand}</Tool>
            <Tool $gap={36.5}>{ToolbarIcons.minus}</Tool>
            <Tool $gap={38}>{ToolbarIcons.plus}</Tool>
            <UnderlinedField $gap={38.5} $w={148}><ZoomValue>63.2%</ZoomValue><Caret color={GREY} /></UnderlinedField>
            <Tool $gap={38}>{ToolbarIcons.fit}</Tool>
            <Tool $gap={1} $w={18}><Caret color={BLUE} /></Tool>
            <Tool $gap={42.5}>{ToolbarIcons.keys}</Tool>
            <Rule $gap={37.5} />
            <Tool $gap={38.5}>{ToolbarIcons.comment}</Tool>
            <Tool $gap={37.5}>{ToolbarIcons.highlight}</Tool>
            <Tool $gap={45.5}>{ToolbarIcons.more}</Tool>
          </Toolbar>

          <PaneBar>
            <PaneTitle>导出 PDF</PaneTitle>
            <ClosePill>关闭</ClosePill>
          </PaneBar>

          <Workspace>
            <Document>
              <ColumnRule />
              <ExportButton>导出</ExportButton>
              <HelpLink>帮助</HelpLink>
            </Document>
            <Rail>
              {RailIcons.map((icon, i) => <RailSlot key={i} $active={i === 4}>{icon}</RailSlot>)}
            </Rail>
          </Workspace>
        </AppWindow>

        <Dialog>
          <DialogTitle $h={43}>
            <Lights $left={15}><Light /><Light /><Light $on /></Lights>
            <span>另存为</span>
          </DialogTitle>

          <NameForm>
            <FormLabel>存储为：</FormLabel><FormField>Overview</FormField>
            <FormLabel>标签：</FormLabel><FormField />
          </NameForm>

          <BrowseBar>
            <Control $w={49}><Icon w={16} h={30} stroke="#a9aaac" sw={2.8}><path d="M14 3 3 15l11 12" /></Icon></Control>
            <Control $w={49} $gap={2}><Icon w={16} h={30} stroke="#a9aaac" sw={2.8}><path d="M3 3l11 12L3 27" /></Icon></Control>
            <Control $w={86} $gap={15}>
              <Icon w={54} h={24} stroke="#47484a" sw={2.2}><rect x="1" y="3" width="30" height="20" rx="1" /><path d="M11 3v20M21 3v20" /><path d="M40.500 9.500l5 5.500 5-5.500" strokeWidth="3" /></Icon>
            </Control>
            <Control $w={86} $gap={11}>
              <Icon w={36} h={28} stroke="#5b5c5e" sw={2}><path d="M25 3.500H13l-2-3H2v24h28v-8M2 8h21M30 4v10M25 9h10" /></Icon>
            </Control>
            <Location $w={430} $gap={309}>
              <svg width="30" height="25" viewBox="0 0 30 25">
                <path d="M0 3q0-2 2-2h7l3 3h16q2 0 2 2v17q0 2-2 2H2q-2 0-2-2z" fill="#52b8e4" /><path d="M0 7h30v15q0 2-2 2H2q-2 0-2-2z" fill="#6dcff6" />
              </svg>
              <span>Export to PPT</span>
              <UpDown color="#4c4d4f" />
            </Location>
            <Control $w={37} $h={38} $gap={18}><Icon w={18} h={14} stroke="#3c3d3f" sw={3}><path d="M3 10l6-7 6 7" /></Icon></Control>
            <SearchBox $w={424} $gap={76}>
              <Icon w={26} h={28} stroke="#5b5c5e" sw={2.2}><circle cx="11" cy="12" r="9.500" /><path d="M18 19l7 7" /></Icon>
              <span>搜索</span>
            </SearchBox>
          </BrowseBar>

          <Browser>
            <Sidebar>
              <SideHeading $top={17} $h={48}>个人收藏</SideHeading>
              <SideItem>{SideIcons.apps}<span>应用程序</span></SideItem>
              <SideItem>{SideIcons.desktop}<span>桌面</span></SideItem>
              <SideItem>{SideIcons.docs}<span>文稿</span></SideItem>
              <SideItem>{SideIcons.down}<span>下载</span></SideItem>
              <SideHeading $top={26} $h={56.5}>位置</SideHeading>
              <SideItem>{SideIcons.net}<span>网络</span></SideItem>
              <SideHeading $top={26.5} $h={56.5}>标签</SideHeading>
              <SideItem><Dot $fill="#f95a52" $edge="#e8423c" /><span>红色</span></SideItem>
              <SideItem><Dot $fill="#f8a03e" $edge="#ea8a26" /><span>橙色</span></SideItem>
            </Sidebar>
            <FileColumn>
              <ColumnHead>早些时候</ColumnHead>
              <FileRow><PdfFile faded /><span>Overview.pdf</span></FileRow>
            </FileColumn>
          </Browser>

          <FormatBar>
            <FormatLabel>格式：</FormatLabel>
            <FormatSelect><FormatValue>JPEG</FormatValue><Stepper><UpDown color="#fff" /></Stepper></FormatSelect>
            <SettingsButton $w={157}>设置...</SettingsButton>
          </FormatBar>

          <Footer>
            <PushButton $w={182}>新建文件夹</PushButton>
            <Spacer />
            <PushButton $w={136}>取消</PushButton>
            <SaveSlot><PushButton $w={138} $primary>存储</PushButton></SaveSlot>
          </Footer>
        </Dialog>

        <Highlight />
        <Caption>
          在「导出」对话框中，选择要保存文件的位置，单击「存储」可以仅将<Latin> PDF </Latin>中的图像保存<br />为选定的文件格式
        </Caption>
        <Watermark>
          <WatermarkLogo>
            <svg width="19" height="22" viewBox="0 0 19 22" fill="none" stroke="#fb5a1e" strokeWidth="4.500"><path d="M2 3.500h13L4 18h12" /></svg>
          </WatermarkLogo>
          <WatermarkText>www.MacZ.com</WatermarkText>
        </Watermark>
      </Screen>
    </>
  );
}
